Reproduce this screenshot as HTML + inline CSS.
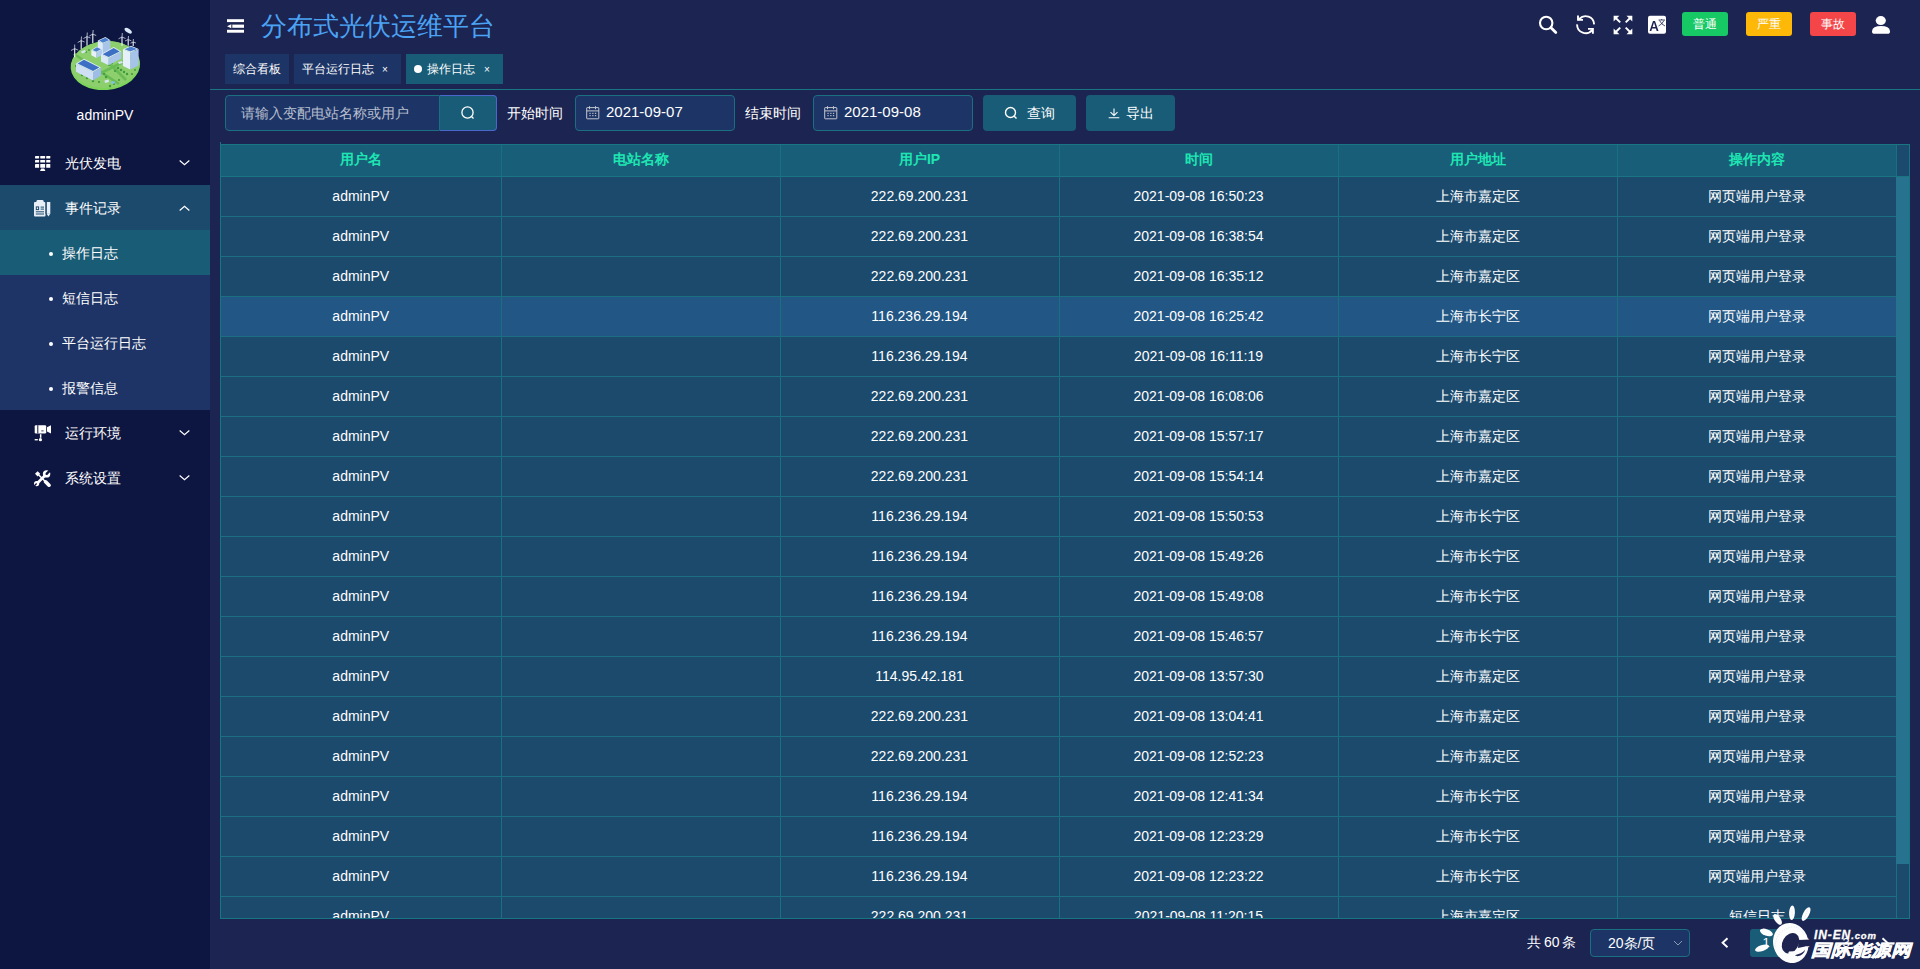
<!DOCTYPE html>
<html><head><meta charset="utf-8">
<style>
*{box-sizing:border-box;margin:0;padding:0}
html,body{width:1920px;height:969px;overflow:hidden}
body{background:#1c2451;font-family:"Liberation Sans",sans-serif;color:#fff;font-size:14px;position:relative}
.abs{position:absolute}
#side{position:absolute;left:0;top:0;width:210px;height:969px;background:#0d1541}
.uname{position:absolute;left:0;width:210px;top:106px;text-align:center;font-size:14px;line-height:18px}
.mi{position:absolute;left:0;width:210px;height:45px;line-height:45px;font-size:14px}
.mi .ic{position:absolute;left:34px;top:14px}
.mi .tx{position:absolute;left:65px;top:1px}
.mi .ar{position:absolute;left:178px;top:18px;width:11px;height:8px}
.sub .dot{position:absolute;left:48.7px;top:21.6px;width:4.4px;height:4.4px;border-radius:50%;background:#fff}
.sub .tx{left:62px}
#main{position:absolute;left:210px;top:0;width:1710px;height:969px}
.title{position:absolute;left:261px;top:9px;font-size:26px;line-height:34px;color:#4aa3f4;letter-spacing:0px}
.tab{position:absolute;top:54px;height:30px;line-height:30px;font-size:12px;background:#1d3566;padding:0 0 0 8px}
.tab.act{background:#195c77}
.tab .x{position:absolute;top:1px;font-size:10px}
.hline{position:absolute;left:210px;top:89px;width:1710px;height:1px;background:#197582}
.inp{position:absolute;top:95px;height:36px;border:1px solid #1a6f80;border-radius:4px;background:#1d3566}
.lbl{position:absolute;top:95px;line-height:36px;font-size:14px}
.btn{position:absolute;top:95px;height:36px;border-radius:4px;background:#195c77;line-height:36px;font-size:14px}
#tbl{position:absolute;left:220px;top:144px;width:1690px;height:775px;border:1px solid #1a7583;overflow:hidden;background:#1c4a6d}
table{border-collapse:collapse;table-layout:fixed;width:1676px}
th{height:31px;background:#195e78;color:#1ee6b3;font-weight:bold;font-size:14px;text-align:center;border-right:1px solid #1a7080;border-bottom:1px solid #1a7583}
td{height:40px;text-align:center;font-size:14px;border-right:1px solid #1a7080;border-bottom:1px solid #1a7080;background:#1c4a6d}
tr.hl td{background:#215685}
.cj{position:relative;top:1px}
.gut{position:absolute;right:0;top:0;width:13px;height:32px;background:#1b4a6e;border-left:1px solid #1a7080;border-bottom:1px solid #1a7583}
.track{position:absolute;right:0;top:32px;width:13px;height:741px;background:#1c4a6d;border-left:1px solid #1a7080}
.thumb{position:absolute;right:0;top:32px;width:13px;height:687px;background:#27738f}
.pg{position:absolute;font-size:14px}
.badge{top:12px;width:46px;height:24px;border-radius:3px;font-size:12px;line-height:25px;text-align:center}
</style></head><body>
<div id="side">
  <svg class="abs" style="left:60px;top:20px" width="90" height="80" viewBox="60 20 90 80">
    <ellipse cx="105.4" cy="65.6" rx="34.8" ry="24.4" transform="rotate(-5 105.4 65.6)" fill="#7cd45a"/>
    <ellipse cx="105.4" cy="64.6" rx="34.2" ry="23.2" transform="rotate(-5 105.4 64.6)" fill="#8ccf6c"/>
    <g stroke="#68bb55" stroke-width="2.6" fill="none">
      <path d="M74 54 L119 84"/><path d="M95 76 L137 55"/><path d="M108 62 L126 80"/>
    </g>
    <g fill="#3f9a3c">
      <circle cx="76" cy="66" r="1.1"/><circle cx="78" cy="71" r="1.2"/><circle cx="82" cy="75" r="1.2"/><circle cx="87" cy="78" r="1.2"/><circle cx="93" cy="81" r="1.2"/><circle cx="99" cy="82" r="1.1"/>
      <circle cx="106" cy="77" r="1.2"/><circle cx="104" cy="74" r="1.1"/><circle cx="110" cy="86" r="1.2"/><circle cx="114" cy="84" r="1.1"/><circle cx="119" cy="80" r="1.1"/>
      <circle cx="118" cy="68" r="1.3"/><circle cx="121" cy="70" r="1.3"/><circle cx="124" cy="72" r="1.2"/><circle cx="127" cy="74" r="1.2"/><circle cx="115" cy="71" r="1.1"/>
      <circle cx="86" cy="52" r="1"/><circle cx="89" cy="50" r="1"/><circle cx="109" cy="65" r="1.1"/><circle cx="112" cy="63" r="1.1"/><circle cx="132" cy="74" r="1.1"/><circle cx="135" cy="70" r="1"/>
    </g>
    <path d="M81 51.5 L85 50 L86 52 L82 53.5Z" fill="#dbe6f5"/><path d="M118 62 L122 61 L123 63 L119 64Z" fill="#dbe6f5"/><path d="M104.5 80.5 L108.5 79.5 L109 82 L105 83Z" fill="#dbe6f5"/><ellipse cx="113" cy="82.5" rx="2.2" ry="1.2" fill="#7fc4e0"/>
    <path d="M76 63.4 L84 58.7 L101 67.4 L93.1 72Z" fill="#e4eefa"/><path d="M77.6 63.4 L84 59.8 L99.3 67.4 L93.1 70.9Z" fill="#3d6fc4"/>
    <path d="M76 63.4 L93.1 72 L93.1 80.4 L76 71.7Z" fill="#cfe0f5"/><path d="M93.1 72 L101 67.4 L101 75.6 L93.1 80.4Z" fill="#9dbde6"/>
    <path d="M97.8 40.6 L105.4 37 L110.4 40.3 L102.9 43.5Z" fill="#e4eefa"/><path d="M99.2 40.6 L105.4 37.8 L109 40.3 L102.9 42.8Z" fill="#4a7fd0"/>
    <path d="M97.8 40.6 L102.9 43.5 L102.9 56 L97.8 53Z" fill="#dceafa"/><path d="M102.9 43.5 L110.4 40.3 L110.4 52 L102.9 56Z" fill="#a8c4e8"/>
    <path d="M91.3 50 L97 46.4 L102.1 49.3 L96.4 52.6Z" fill="#e4eefa"/><path d="M92.5 50 L97 47.2 L101 49.3 L96.4 51.8Z" fill="#4a7fd0"/>
    <path d="M91.3 50 L96.4 52.6 L96.4 58 L91.3 55.3Z" fill="#e8f0fa"/><path d="M96.4 52.6 L102.1 49.3 L102.1 55 L96.4 58Z" fill="#b0cbec"/>
    <path d="M101 54.3 L113.7 47.1 L121.3 51.5 L108.6 58Z" fill="#e4eefa"/><path d="M102.6 54.3 L113.7 48 L119.7 51.5 L108.6 57Z" fill="#3d6fc4"/>
    <path d="M101 54.3 L108.6 58 L108.6 65.2 L101 61.5Z" fill="#dbe8f8"/><path d="M108.6 58 L121.3 51.5 L121.3 58.5 L108.6 65.2Z" fill="#a9c6ea"/>
    <path d="M123 49.3 L131 45.7 L138.6 48.9 L130.3 52.5Z" fill="#eef4fc"/><path d="M124.6 49.3 L131 46.5 L137 48.9 L130.3 51.6Z" fill="#4a7fd0"/>
    <path d="M123 49.3 L130.3 52.5 L130.3 69.5 L123 66Z" fill="#e6f0fb"/><path d="M130.3 52.5 L138.6 48.9 L138.6 65.5 L130.3 69.5Z" fill="#a6c4ea"/>
    <g stroke="#f0f4fa" stroke-width="1.1" fill="none">
      <path d="M74.7 48.6 L74.7 57.2 M81.2 40.6 L81.2 49.3 M87 36.6 L87 45.7 M92.8 34.1 L92.8 43.1 M122 37 L122 45.7 M128.2 39.5 L128.2 45.7 M133.2 42 L133.2 46"/>
    </g>
    <g stroke="#e6ecf4" stroke-width="0.7" fill="none">
      <path d="M74.7 48.6 L74.7 44.5 M74.7 48.6 L71 50.5 M74.7 48.6 L78.2 50.2"/>
      <path d="M81.2 40.6 L81.5 36.5 M81.2 40.6 L77.7 42.5 M81.2 40.6 L84.6 42"/>
      <path d="M87 36.6 L87.3 32.5 M87 36.6 L83.5 38.5 M87 36.6 L90.4 38"/>
      <path d="M92.8 34.1 L93.2 30 M92.8 34.1 L89.3 36 M92.8 34.1 L96.2 35.5"/>
      <path d="M122 37 L122.3 33 M122 37 L118.5 38.8 M122 37 L125.5 38.5"/>
      <path d="M128.2 39.5 L128.5 36 M128.2 39.5 L125 41 M128.2 39.5 L131.3 40.8"/>
      <path d="M133.2 42 L133.4 39 M133.2 42 L130.5 43.2 M133.2 42 L136 43"/>
    </g>
    <ellipse cx="128.2" cy="30.7" rx="4.2" ry="2" fill="#d8e8f6" transform="rotate(35 128.2 30.7)"/>
  </svg>
  <div class="uname">adminPV</div>

  <div class="mi" style="top:140px">
    <svg class="ic" style="top:14px" width="17" height="19" viewBox="0 0 17 19"><g fill="#fff"><rect x="1" y="2" width="4.1" height="2.5" rx="0.4"/><rect x="6.25" y="2" width="4.85" height="2.5" rx="0.4"/><rect x="12.2" y="2" width="4.1" height="2.5" rx="0.4"/><rect x="1" y="6" width="4.1" height="2.6" rx="0.4"/><rect x="6.25" y="6" width="4.85" height="2.6" rx="0.4"/><rect x="12.2" y="6" width="4.1" height="2.6" rx="0.4"/><rect x="1" y="10.1" width="4.1" height="3.7" rx="0.4"/><rect x="6.25" y="10.1" width="4.85" height="3.7" rx="0.4"/><rect x="12.2" y="10.1" width="4.1" height="3.7" rx="0.4"/><path d="M7.2 14.6 L10.2 14.6 L11.4 17 L6 17Z"/></g></svg>
    <span class="tx">光伏发电</span>
    <svg class="ar" style="left:179px;top:18.5px" width="10" height="6" viewBox="0 0 10 6"><path d="M0.6 0.8 L5 4.6 L9.4 0.8" stroke="#fff" stroke-width="1.1" fill="none"/></svg>
  </div>
  <div class="mi" style="top:185px;background:#1c4a6d">
    <svg class="ic" style="top:14px" width="17" height="19" viewBox="0 0 17 19"><g fill="#e9eff6"><rect x="2.5" y="1.1" width="7.1" height="3.6" rx="1.2"/><rect x="0" y="3" width="11.5" height="14.4" rx="1"/><rect x="12.6" y="3" width="3.7" height="11.8"/><path d="M12.6 14.8 L16.3 14.8 L14.45 17.4Z"/></g><g fill="#1c4a6d"><rect x="1.8" y="7.4" width="3.3" height="3.7"/><rect x="6.6" y="7.6" width="3.4" height="1"/><rect x="6.6" y="9.6" width="3.4" height="1"/><rect x="1.8" y="12.3" width="8.2" height="1"/><rect x="1.8" y="14.5" width="8.2" height="1"/><rect x="11.5" y="3" width="1.1" height="12"/></g><rect x="2.8" y="8.4" width="1.3" height="1.7" fill="#e9eff6"/></svg>
    <span class="tx">事件记录</span>
    <svg class="ar" style="left:179px;top:19px" width="10" height="6" viewBox="0 0 10 6"><path d="M0.6 5.2 L5 1.4 L9.4 5.2" stroke="#fff" stroke-width="1.1" fill="none"/></svg>
  </div>
  <div class="mi sub" style="top:230px;background:#195c76"><span class="dot"></span><span class="tx">操作日志</span></div>
  <div class="mi sub" style="top:275px;background:#1e3466"><span class="dot"></span><span class="tx">短信日志</span></div>
  <div class="mi sub" style="top:320px;background:#1e3466"><span class="dot"></span><span class="tx">平台运行日志</span></div>
  <div class="mi sub" style="top:365px;background:#1e3466"><span class="dot"></span><span class="tx">报警信息</span></div>
  <div class="mi" style="top:410px">
    <svg class="ic" style="top:14px" width="17" height="18" viewBox="0 0 17 18"><g fill="#fff"><rect x="0.7" y="1.2" width="11.5" height="8.2" rx="1.2"/><path d="M13 3.2 L17 1.2 L17 9.4 L13 7.6Z"/><rect x="5.9" y="10.2" width="1.5" height="3.6"/><circle cx="6.4" cy="15.7" r="1.6"/><rect x="0.7" y="15" width="3.1" height="1.4"/></g><g fill="#0d1541"><rect x="3.3" y="1.2" width="1" height="8.2"/><rect x="7.3" y="6.5" width="2.3" height="0.8"/></g></svg>
    <span class="tx">运行环境</span>
    <svg class="ar" style="left:179px;top:18.5px" width="10" height="6" viewBox="0 0 10 6"><path d="M0.6 0.8 L5 4.6 L9.4 0.8" stroke="#fff" stroke-width="1.1" fill="none"/></svg>
  </div>
  <div class="mi" style="top:455px">
    <svg class="ic" style="top:14px" width="17" height="18" viewBox="0 0 17 18"><g fill="#fff"><path d="M3.6 2.2 L6.2 4.8 L3.6 7.4 L1 4.8Z"/><circle cx="12.6" cy="4.9" r="3.7"/><circle cx="2.6" cy="14.6" r="2.6"/></g><g stroke="#fff" fill="none" stroke-linecap="round"><path d="M3 14.5 L11 6.5" stroke-width="2.6"/><path d="M4.8 6 L11 12.2" stroke-width="1.6"/><path d="M11.6 12.8 L15 16.2" stroke-width="3.6"/></g><g stroke="#0d1541" stroke-linecap="butt"><path d="M12.6 4.9 L17 0.5" stroke-width="2.4"/><path d="M2.6 14.6 L0 17.2" stroke-width="1.4"/></g><circle cx="12.6" cy="4.9" r="1.1" fill="#0d1541"/></svg>
    <span class="tx">系统设置</span>
    <svg class="ar" style="left:179px;top:18.5px" width="10" height="6" viewBox="0 0 10 6"><path d="M0.6 0.8 L5 4.6 L9.4 0.8" stroke="#fff" stroke-width="1.1" fill="none"/></svg>
  </div>
</div>

<!-- header -->
<svg class="abs" style="left:227px;top:19px" width="17" height="14" viewBox="0 0 17 14"><g fill="#fff"><rect x="0" y="0.2" width="17" height="2.9"/><rect x="5.3" y="5.6" width="11.7" height="3.2"/><rect x="0" y="10.8" width="17" height="2.9"/><path d="M0 7.2 L4.3 5.2 L4.3 9.3Z"/></g></svg>
<div class="title">分布式光伏运维平台</div>

<!-- right icons -->
<svg class="abs" style="left:1536px;top:13px" width="24" height="24" viewBox="1536 13 24 24"><circle cx="1546.2" cy="23" r="6.2" stroke="#fff" stroke-width="2.1" fill="none"/><path d="M1551 27.8 L1555.8 32.6" stroke="#fff" stroke-width="2.8" stroke-linecap="round"/></svg>
<svg class="abs" style="left:1574px;top:13px" width="24" height="24" viewBox="1574 13 24 24"><g stroke="#fff" stroke-width="1.9" fill="none"><path d="M1578.3 20.2 L1579.3 19 A8.5 8.5 0 0 1 1594.1 24.4"/><path d="M1577.1 24.4 A8.5 8.5 0 0 0 1592.3 29.9"/><path d="M1578 15.6 L1578 19.9 L1583 19.9"/><path d="M1588 28.9 L1592.9 28.9 L1592.9 33.8"/></g></svg>
<svg class="abs" style="left:1612px;top:14px" width="22" height="22" viewBox="1612 14 22 22"><g fill="#fff"><path d="M1613.6 15.8 L1619.4 15.8 L1613.6 21.6Z"/><path d="M1632.3 15.8 L1632.3 21.6 L1626.5 15.8Z"/><path d="M1613.6 34.2 L1613.6 28.4 L1619.4 34.2Z"/><path d="M1632.3 34.2 L1626.5 34.2 L1632.3 28.4Z"/></g><g stroke="#fff" stroke-width="2"><path d="M1615.5 17.7 L1620.2 22.4"/><path d="M1630.4 17.7 L1625.7 22.4"/><path d="M1615.5 32.3 L1620.2 27.6"/><path d="M1630.4 32.3 L1625.7 27.6"/></g></svg>
<svg class="abs" style="left:1647px;top:15px" width="20" height="20" viewBox="1647 15 20 20"><rect x="1648" y="15.8" width="18" height="18" rx="2" fill="#fff"/><path d="M1649.6 31 L1653 20.9 L1655 20.9 L1658.5 31 L1656.7 31 L1655.9 28.5 L1652.1 28.5 L1651.3 31Z M1652.6 26.9 L1655.4 26.9 L1654 22.6Z" fill="#1e2350"/><g stroke="#1e2350" stroke-width="0.8" fill="none"><path d="M1658.5 20 L1665 20 M1661.7 19 L1661.7 20"/><path d="M1659.5 20.5 Q1661.5 24.5 1665 26 M1664 20.5 Q1662 24.5 1658.5 26"/></g></svg>
<div class="abs badge" style="left:1682px;background:#17c964">普通</div>
<div class="abs badge" style="left:1746px;background:#fdb808">严重</div>
<div class="abs badge" style="left:1810px;background:#f44648">事故</div>
<svg class="abs" style="left:1870px;top:14px" width="22" height="22" viewBox="1870 14 22 22"><ellipse cx="1880.8" cy="20.6" rx="5.1" ry="4.5" fill="#fff"/><path d="M1872 31.2 Q1872.5 26.1 1881 26.1 Q1889.5 26.1 1890 31.2 Q1890 33.8 1887.5 33.8 L1874.5 33.8 Q1872 33.8 1872 31.2Z" fill="#fff"/></svg>

<!-- tabs -->
<div class="tab" style="left:225px;width:64px">综合看板</div>
<div class="tab" style="left:294px;width:107px">平台运行日志<span class="x" style="left:88px">×</span></div>
<div class="tab act" style="left:406px;width:97px"><span class="abs" style="left:8px;top:11px;width:8px;height:8px;border-radius:50%;background:#fff"></span><span class="abs" style="left:21px;top:0">操作日志</span><span class="x" style="left:78px">×</span></div>
<div class="hline"></div>

<!-- search bar -->
<div class="inp" style="left:225px;width:215px;border-radius:4px 0 0 4px">
  <span class="abs" style="left:15px;top:0;line-height:34px;font-size:14px;color:#b8bfd0">请输入变配电站名称或用户</span>
</div>
<div class="abs" style="left:440px;top:95px;width:57px;height:36px;background:#195c77;border:1px solid #4a68cc;border-left:none;border-radius:0 4px 4px 0">
  <svg class="abs" style="left:20px;top:10px" width="16" height="16" viewBox="0 0 16 16"><circle cx="7.5" cy="6.5" r="5.6" stroke="#fff" stroke-width="1.3" fill="none"/><path d="M11.5 10.5 L13.5 12.5" stroke="#fff" stroke-width="1.3"/></svg>
</div>
<div class="lbl" style="left:507px">开始时间</div>
<div class="inp" style="left:575px;width:160px">
  <svg class="abs" style="left:10px;top:10px" width="14" height="14" viewBox="0 0 14 14"><g stroke="#c4c6d0" fill="none" stroke-width="1"><rect x="0.7" y="1.6" width="12.1" height="11.2" rx="0.5"/><path d="M0.7 4.9 L12.8 4.9"/></g><g fill="#c4c6d0"><rect x="3" y="0.2" width="1" height="3"/><rect x="9" y="0.2" width="1" height="3"/><rect x="3.4" y="6.8" width="1.3" height="1.1"/><rect x="6.2" y="6.8" width="1.3" height="1.1"/><rect x="8.9" y="6.8" width="1.3" height="1.1"/><rect x="3.4" y="9.1" width="1.3" height="1.1"/><rect x="6.2" y="9.1" width="1.3" height="1.1"/><rect x="8.9" y="9.1" width="1.3" height="1.1"/></g></svg>
  <span class="abs" style="left:30px;top:-1px;line-height:34px;font-size:15px">2021-09-07</span>
</div>
<div class="lbl" style="left:745px">结束时间</div>
<div class="inp" style="left:813px;width:160px">
  <svg class="abs" style="left:10px;top:10px" width="14" height="14" viewBox="0 0 14 14"><g stroke="#c4c6d0" fill="none" stroke-width="1"><rect x="0.7" y="1.6" width="12.1" height="11.2" rx="0.5"/><path d="M0.7 4.9 L12.8 4.9"/></g><g fill="#c4c6d0"><rect x="3" y="0.2" width="1" height="3"/><rect x="9" y="0.2" width="1" height="3"/><rect x="3.4" y="6.8" width="1.3" height="1.1"/><rect x="6.2" y="6.8" width="1.3" height="1.1"/><rect x="8.9" y="6.8" width="1.3" height="1.1"/><rect x="3.4" y="9.1" width="1.3" height="1.1"/><rect x="6.2" y="9.1" width="1.3" height="1.1"/><rect x="8.9" y="9.1" width="1.3" height="1.1"/></g></svg>
  <span class="abs" style="left:30px;top:-1px;line-height:34px;font-size:15px">2021-09-08</span>
</div>
<div class="btn" style="left:983px;width:93px">
  <svg class="abs" style="left:21px;top:11px" width="14" height="14" viewBox="0 0 14 14"><circle cx="6.5" cy="6.5" r="5" stroke="#fff" stroke-width="1.4" fill="none"/><path d="M10 10 L12.5 12.5" stroke="#fff" stroke-width="1.4"/></svg>
  <span class="abs" style="left:44px;top:0">查询</span>
</div>
<div class="btn" style="left:1086px;width:89px">
  <svg class="abs" style="left:22px;top:13px" width="12" height="11" viewBox="0 0 12 11"><path d="M6 0.5 L6 7.5 M2.5 4.2 L6 7.6 L9.5 4.2 M0.7 9.7 L11.3 9.7" stroke="#fff" stroke-width="1.1" fill="none"/></svg>
  <span class="abs" style="left:40px;top:0">导出</span>
</div>

<!-- table -->
<div class="abs" style="left:220px;top:142px;width:1px;height:2px;background:#1a7583"></div>
<div id="tbl">
<table>
<colgroup><col style="width:280px"><col style="width:279px"><col style="width:279px"><col style="width:279px"><col style="width:279px"><col style="width:280px"></colgroup>
<thead><tr><th>用户名</th><th>电站名称</th><th>用户IP</th><th>时间</th><th>用户地址</th><th>操作内容</th></tr></thead>
<tbody>
<tr><td>adminPV</td><td></td><td>222.69.200.231</td><td>2021-09-08 16:50:23</td><td><span class="cj">上海市嘉定区</span></td><td><span class="cj">网页端用户登录</span></td></tr>
<tr><td>adminPV</td><td></td><td>222.69.200.231</td><td>2021-09-08 16:38:54</td><td><span class="cj">上海市嘉定区</span></td><td><span class="cj">网页端用户登录</span></td></tr>
<tr><td>adminPV</td><td></td><td>222.69.200.231</td><td>2021-09-08 16:35:12</td><td><span class="cj">上海市嘉定区</span></td><td><span class="cj">网页端用户登录</span></td></tr>
<tr class="hl"><td>adminPV</td><td></td><td>116.236.29.194</td><td>2021-09-08 16:25:42</td><td><span class="cj">上海市长宁区</span></td><td><span class="cj">网页端用户登录</span></td></tr>
<tr><td>adminPV</td><td></td><td>116.236.29.194</td><td>2021-09-08 16:11:19</td><td><span class="cj">上海市长宁区</span></td><td><span class="cj">网页端用户登录</span></td></tr>
<tr><td>adminPV</td><td></td><td>222.69.200.231</td><td>2021-09-08 16:08:06</td><td><span class="cj">上海市嘉定区</span></td><td><span class="cj">网页端用户登录</span></td></tr>
<tr><td>adminPV</td><td></td><td>222.69.200.231</td><td>2021-09-08 15:57:17</td><td><span class="cj">上海市嘉定区</span></td><td><span class="cj">网页端用户登录</span></td></tr>
<tr><td>adminPV</td><td></td><td>222.69.200.231</td><td>2021-09-08 15:54:14</td><td><span class="cj">上海市嘉定区</span></td><td><span class="cj">网页端用户登录</span></td></tr>
<tr><td>adminPV</td><td></td><td>116.236.29.194</td><td>2021-09-08 15:50:53</td><td><span class="cj">上海市长宁区</span></td><td><span class="cj">网页端用户登录</span></td></tr>
<tr><td>adminPV</td><td></td><td>116.236.29.194</td><td>2021-09-08 15:49:26</td><td><span class="cj">上海市长宁区</span></td><td><span class="cj">网页端用户登录</span></td></tr>
<tr><td>adminPV</td><td></td><td>116.236.29.194</td><td>2021-09-08 15:49:08</td><td><span class="cj">上海市长宁区</span></td><td><span class="cj">网页端用户登录</span></td></tr>
<tr><td>adminPV</td><td></td><td>116.236.29.194</td><td>2021-09-08 15:46:57</td><td><span class="cj">上海市长宁区</span></td><td><span class="cj">网页端用户登录</span></td></tr>
<tr><td>adminPV</td><td></td><td>114.95.42.181</td><td>2021-09-08 13:57:30</td><td><span class="cj">上海市嘉定区</span></td><td><span class="cj">网页端用户登录</span></td></tr>
<tr><td>adminPV</td><td></td><td>222.69.200.231</td><td>2021-09-08 13:04:41</td><td><span class="cj">上海市嘉定区</span></td><td><span class="cj">网页端用户登录</span></td></tr>
<tr><td>adminPV</td><td></td><td>222.69.200.231</td><td>2021-09-08 12:52:23</td><td><span class="cj">上海市嘉定区</span></td><td><span class="cj">网页端用户登录</span></td></tr>
<tr><td>adminPV</td><td></td><td>116.236.29.194</td><td>2021-09-08 12:41:34</td><td><span class="cj">上海市长宁区</span></td><td><span class="cj">网页端用户登录</span></td></tr>
<tr><td>adminPV</td><td></td><td>116.236.29.194</td><td>2021-09-08 12:23:29</td><td><span class="cj">上海市长宁区</span></td><td><span class="cj">网页端用户登录</span></td></tr>
<tr><td>adminPV</td><td></td><td>116.236.29.194</td><td>2021-09-08 12:23:22</td><td><span class="cj">上海市长宁区</span></td><td><span class="cj">网页端用户登录</span></td></tr>
<tr><td>adminPV</td><td></td><td>222.69.200.231</td><td>2021-09-08 11:20:15</td><td><span class="cj">上海市嘉定区</span></td><td><span class="cj">短信日志</span></td></tr>
</tbody>
</table>
<div class="gut"></div>
<div class="track"></div>
<div class="thumb"></div>
</div>

<!-- pagination -->
<div class="pg" style="left:1527px;top:932px;line-height:20px;word-spacing:-1px">共 60 条</div>
<div class="abs" style="left:1590px;top:929px;width:100px;height:28px;border:1px solid #1a6f80;border-radius:4px;background:#1d3566">
  <span class="abs" style="left:17px;top:0;line-height:26px;font-size:14px">20条/页</span>
  <svg class="abs" style="left:82px;top:10px" width="10" height="7" viewBox="0 0 10 7"><path d="M1 1 L5 5 L9 1" stroke="#8a9ab0" stroke-width="1" fill="none"/></svg>
</div>
<svg class="abs" style="left:1720px;top:937px" width="10" height="12" viewBox="0 0 10 12"><path d="M7.5 1.3 L2.6 5.8 L7.5 10.3" stroke="#fff" stroke-width="1.9" fill="none"/></svg>
<div class="abs" style="left:1750px;top:929px;width:32px;height:28px;background:#195c77;border-radius:3px;font-size:13px;line-height:28px;text-align:center">1</div>
<div class="abs" style="left:1790px;top:929px;width:32px;height:28px;font-size:13px;line-height:28px;text-align:center">2</div>
<div class="abs" style="left:1830px;top:929px;width:32px;height:28px;font-size:13px;line-height:28px;text-align:center">3</div>
<svg class="abs" style="left:1880px;top:937px" width="10" height="12" viewBox="0 0 10 12"><path d="M2.5 1.3 L7.4 5.8 L2.5 10.3" stroke="#fff" stroke-width="1.9" fill="none"/></svg>

<!-- watermark -->
<svg class="abs" style="left:1750px;top:900px" width="170" height="69" viewBox="1750 900 170 69">
  <g fill="#fdfdfd">
    <ellipse cx="1792" cy="912.7" rx="2.9" ry="7.3" transform="rotate(3 1792 912.7)"/>
    <ellipse cx="1806.1" cy="914.1" rx="3" ry="7.6" transform="rotate(28 1806.1 914.1)"/>
    <ellipse cx="1777.6" cy="919.4" rx="3" ry="6.2" transform="rotate(-35 1777.6 919.4)"/>
    <ellipse cx="1766.4" cy="932.4" rx="6.8" ry="3.2" transform="rotate(20 1766.4 932.4)"/>
    <ellipse cx="1762" cy="948.1" rx="7.3" ry="3" transform="rotate(-18 1762 948.1)"/>
    <ellipse cx="1790.8" cy="943" rx="17.6" ry="20.1" transform="rotate(-15 1790.8 943)"/>
  </g>
  <ellipse cx="1790.5" cy="943.2" rx="8" ry="10.8" transform="rotate(30 1790.5 943.2)" fill="#1e2350"/>
  <path d="M1798.5 940 L1811 939.5 L1811 946.3 L1806.3 946.3 L1798 948 Z" fill="#1e2350"/>
  <path d="M1789 951.6 Q1799 951.5 1806.3 946.3 Q1803.5 951.8 1797 953.6 Q1792 954.6 1788 953.5 Z" fill="#fdfdfd"/>
  <path d="M1794.8 955.2 Q1801.5 954 1805.2 949.8 Q1803.8 955.2 1797.5 956.3 Z" fill="#1e2350"/>
  <g stroke="#d0d8e8" stroke-width="0.5" fill="none" stroke-dasharray="1.5 1">
    <path d="M1775 947 Q1776 930 1792 927 Q1800 926 1804 935"/>
    <path d="M1792 909 L1792 917"/><path d="M1804 919 L1808 909"/>
  </g>
  <text x="1814" y="939.3" font-family="Liberation Sans" font-weight="bold" font-style="italic" font-size="12" fill="#fdfdfd" stroke="#fdfdfd" stroke-width="0.3" textLength="62" lengthAdjust="spacing">IN-EN<tspan font-size="9.5">.com</tspan></text>
  <text x="1810.5" y="956" font-weight="bold" font-style="italic" font-size="16.8" fill="#fdfdfd" stroke="#fdfdfd" stroke-width="0.5" textLength="100" lengthAdjust="spacingAndGlyphs">国际能源网</text>
</svg>
</body></html>
